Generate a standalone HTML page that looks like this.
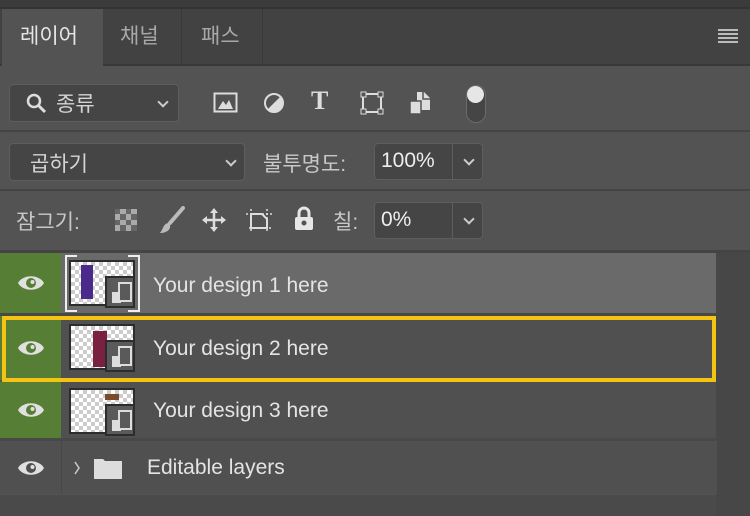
<!DOCTYPE html>
<html><head><meta charset="utf-8"><style>
*{margin:0;padding:0;box-sizing:border-box}
body{width:750px;height:516px;background:#535353;position:relative;overflow:hidden;font-family:"Liberation Sans","Noto Sans CJK KR",sans-serif;color:#ddd}
.a{position:absolute}
.box{position:absolute;background:#454545;border:1px solid #5e5e5e;border-radius:4px}
.t{position:absolute;font-size:21px;color:#d4d4d4;white-space:nowrap}
.chev{position:absolute;width:8px;height:8px;border-right:2px solid #ccc;border-bottom:2px solid #ccc;transform:rotate(45deg)}
.eye{position:absolute;left:0;width:61px;background:#567f35}
.eye svg{position:absolute;left:17px;top:50%;margin-top:-9px}
.row{position:absolute;left:61px;width:655px}
.lt{position:absolute;font-size:21px;color:#e4e4e4;white-space:nowrap}
.th{position:absolute;width:66px;height:46px;border:2px solid #2c2c2c;background-color:#fff;background-image:linear-gradient(45deg,#ccc 25%,transparent 25%,transparent 75%,#ccc 75%),linear-gradient(45deg,#ccc 25%,transparent 25%,transparent 75%,#ccc 75%);background-size:8px 8px;background-position:0 0,4px 4px}
.so{position:absolute;right:-2px;bottom:-4px;width:30px;height:32px;background:#5a5a5a;border:2px solid #2c2c2c}
.so:before{content:"";position:absolute;left:5px;top:14px;width:9px;height:11px;background:#ddd}
.so:after{content:"";position:absolute;left:11px;top:4px;width:10px;height:16px;border:2px solid #ddd;background:#5a5a5a}
</style></head><body>
<div class="a" style="left:0;top:0;width:750px;height:9px;background:#3b3b3b;border-bottom:2px solid #333"></div>
<div class="a" style="left:0;top:9px;width:750px;height:57px;background:#424242;border-bottom:2px solid #383838"></div>
<div class="a" style="left:2px;top:9px;width:101px;height:57px;background:#535353"></div>
<div class="a" style="left:181px;top:9px;width:1px;height:56px;background:#383838"></div>
<div class="a" style="left:262px;top:9px;width:1px;height:56px;background:#383838"></div>
<div class="t" style="left:20px;top:20px;color:#e6e6e6">레이어</div>
<div class="t" style="left:120px;top:20px;color:#a8a8a8">채널</div>
<div class="t" style="left:201px;top:20px;color:#a8a8a8">패스</div>
<div class="a" style="left:718px;top:29px;width:20px;height:14px;background:repeating-linear-gradient(#bbb 0 2px,transparent 2px 4px)"></div>

<div class="box" style="left:9px;top:84px;width:170px;height:38px"></div>
<svg class="a" style="left:26px;top:93px" width="22" height="22"><circle cx="8" cy="8" r="6" fill="none" stroke="#ddd" stroke-width="2.5"/><line x1="12" y1="12" x2="19" y2="19" stroke="#ddd" stroke-width="3"/></svg>
<div class="t" style="left:56px;top:88px">종류</div>
<div class="chev" style="left:159px;top:98px"></div>
<svg class="a" style="left:213px;top:92px" width="26" height="22"><rect x="1.5" y="1.5" width="22" height="18" fill="none" stroke="#ddd" stroke-width="2"/><path d="M5 17 L10 9 L13 13 L16 8 L20 17Z" fill="#ddd"/></svg>
<svg class="a" style="left:263px;top:92px" width="22" height="22"><circle cx="11" cy="11" r="9" fill="none" stroke="#ddd" stroke-width="2"/><path d="M4.6 17.4 A9 9 0 0 0 17.4 4.6Z" fill="#ddd"/></svg>
<div class="t" style="left:311px;top:86px;font-family:'Liberation Serif',serif;font-size:26px;font-weight:bold;color:#ddd">T</div>
<svg class="a" style="left:360px;top:91px" width="24" height="24"><rect x="3" y="3" width="18" height="18" fill="none" stroke="#ddd" stroke-width="2"/><rect x="1" y="1" width="5" height="5" fill="#535353" stroke="#ddd"/><rect x="18" y="1" width="5" height="5" fill="#535353" stroke="#ddd"/><rect x="1" y="18" width="5" height="5" fill="#535353" stroke="#ddd"/><rect x="18" y="18" width="5" height="5" fill="#535353" stroke="#ddd"/></svg>
<svg class="a" style="left:408px;top:90px" width="24" height="26"><path d="M9 2 H16 L22 8 V20 H9Z" fill="#ddd"/><path d="M15 2 V9 H22" fill="none" stroke="#535353" stroke-width="1.5"/><rect x="2" y="11" width="11" height="13" fill="#ddd" stroke="#535353" stroke-width="1.5"/></svg>
<div class="a" style="left:466px;top:85px;width:20px;height:38px;border:1px solid #6a6a6a;border-radius:10px;background:#454545"></div>
<div class="a" style="left:467px;top:86px;width:17px;height:17px;border-radius:50%;background:#e6e6e6"></div>

<div class="a" style="left:0;top:130px;width:750px;height:2px;background:#444"></div>
<div class="box" style="left:9px;top:143px;width:236px;height:38px"></div>
<div class="t" style="left:30px;top:148px">곱하기</div>
<div class="chev" style="left:227px;top:157px"></div>
<div class="t" style="left:263px;top:148px;color:#c8c8c8">불투명도:</div>
<div class="box" style="left:374px;top:143px;width:109px;height:37px"></div>
<div class="a" style="left:452px;top:144px;width:1px;height:35px;background:#5e5e5e"></div>
<div class="t" style="left:381px;top:149px;color:#eee">100%</div>
<div class="chev" style="left:465px;top:156px"></div>

<div class="a" style="left:0;top:189px;width:750px;height:2px;background:#444"></div>
<div class="t" style="left:16px;top:206px;color:#c8c8c8">잠그기:</div>
<svg class="a" style="left:115px;top:209px" width="22" height="22"><rect width="22" height="22" fill="#aaa"/><g fill="#666"><rect x="0" y="0" width="5" height="5"/><rect x="11" y="0" width="5" height="5"/><rect x="5" y="5" width="6" height="6"/><rect x="16" y="5" width="6" height="6"/><rect x="0" y="11" width="5" height="5"/><rect x="11" y="11" width="5" height="5"/><rect x="5" y="16" width="6" height="6"/><rect x="16" y="16" width="6" height="6"/></g></svg>
<svg class="a" style="left:159px;top:206px" width="26" height="28"><path d="M24 2 L11 17" stroke="#bbb" stroke-width="4" stroke-linecap="round"/><path d="M9 17 C4 18 4 24 1 27 C7 27 12 24 11 19Z" fill="#bbb"/></svg>
<svg class="a" style="left:201px;top:207px" width="26" height="26"><path d="M13 1 L9 6 H17Z M13 25 L9 20 H17Z M1 13 L6 9 V17Z M25 13 L20 9 V17Z" fill="#ddd"/><path d="M13 5 V21 M5 13 H21" stroke="#ddd" stroke-width="2.5"/></svg>
<svg class="a" style="left:245px;top:207px" width="28" height="26"><path d="M6 2 V24 M1 7 H27 M4 21 H27 M22 2 V24" stroke="#ddd" stroke-width="1.5" stroke-dasharray="2 2" fill="none"/><path d="M6 7 H17 L22 12 V21 H6Z" fill="none" stroke="#ddd" stroke-width="2"/></svg>
<svg class="a" style="left:293px;top:206px" width="22" height="26"><path d="M6 11 V7 A5 5 0 0 1 16 7 V11" fill="none" stroke="#e6e6e6" stroke-width="3"/><rect x="2" y="11" width="18" height="13" rx="2" fill="#e6e6e6"/><circle cx="11" cy="17" r="2.5" fill="#535353"/></svg>
<div class="t" style="left:333px;top:206px;color:#c8c8c8">칠:</div>
<div class="box" style="left:374px;top:202px;width:109px;height:37px"></div>
<div class="a" style="left:452px;top:203px;width:1px;height:35px;background:#5e5e5e"></div>
<div class="t" style="left:381px;top:208px;color:#eee">0%</div>
<div class="chev" style="left:465px;top:215px"></div>

<div class="a" style="left:0;top:250px;width:750px;height:3px;background:#444"></div>
<div class="a" style="left:716px;top:253px;width:34px;height:263px;background:#474747"></div>
<div class="a" style="left:0;top:495px;width:716px;height:21px;background:#4a4a4a"></div>

<svg width="0" height="0" style="position:absolute"><defs><g id="e"><path d="M1 9 C6 0 22 0 27 9 C22 18 6 18 1 9Z" fill="#e0e0e0"/><circle cx="14" cy="9" r="5" fill="#567f35"/><circle cx="15.5" cy="8" r="2" fill="#e0e0e0"/></g></defs></svg>

<div class="eye" style="top:253px;height:60px"><svg width="28" height="18"><use href="#e"/></svg></div>
<div class="row" style="top:253px;height:60px;background:#6a6a6a"></div>
<div class="a" style="left:65px;top:255px;width:75px;height:57px;border:2px solid #eee;clip-path:polygon(0 0,12px 0,12px 100%,0 100%,0 0,100% 0,100% 100%,calc(100% - 12px) 100%,calc(100% - 12px) 0)"></div>
<div class="th" style="left:69px;top:260px"><div class="a" style="left:10px;top:3px;width:12px;height:34px;background:#4a2a8a"></div><div class="so"></div></div>
<div class="lt" style="left:153px;top:274px">Your design 1 here</div>

<div class="a" style="left:0;top:313px;width:716px;height:3px;background:#484848"></div>
<div class="eye" style="top:316px;height:64px"><svg width="28" height="18"><use href="#e"/></svg></div>
<div class="row" style="top:316px;height:64px;background:#505050"></div>
<div class="th" style="left:69px;top:324px"><div class="a" style="left:22px;top:5px;width:14px;height:36px;background:#7a2040"></div><div class="so"></div></div>
<div class="lt" style="left:153px;top:337px">Your design 2 here</div>
<div class="a" style="left:2px;top:316px;width:714px;height:66px;border:4px solid #f5c413"></div>

<div class="eye" style="top:382px;height:56px"><svg width="28" height="18"><use href="#e"/></svg></div>
<div class="row" style="top:382px;height:56px;background:#505050"></div>
<div class="th" style="left:69px;top:388px"><div class="a" style="left:34px;top:4px;width:14px;height:6px;background:#7a4a2a"></div><div class="so"></div></div>
<div class="lt" style="left:153px;top:399px">Your design 3 here</div>

<div class="a" style="left:0;top:438px;width:716px;height:3px;background:#484848"></div>
<div class="a" style="left:0;top:441px;width:61px;height:53px;background:#505050"></div>
<div class="a" style="left:61px;top:441px;width:1px;height:53px;background:#474747"></div>
<div class="row" style="left:62px;top:441px;height:53px;background:#505050"></div>
<svg class="a" style="left:17px;top:459px" width="28" height="18"><path d="M1 9 C6 0 22 0 27 9 C22 18 6 18 1 9Z" fill="#e0e0e0"/><circle cx="14" cy="9" r="5" fill="#505050"/><circle cx="15.5" cy="8" r="2" fill="#e0e0e0"/></svg>
<svg class="a" style="left:73px;top:460px" width="8" height="16"><path d="M2 2 L6 8 L2 14" fill="none" stroke="#ccc" stroke-width="1.5"/></svg>
<svg class="a" style="left:93px;top:456px" width="30" height="24"><path d="M1 3 H10 L12 5 H29 V23 H1Z" fill="#ddd"/></svg>
<div class="lt" style="left:147px;top:456px">Editable layers</div>
</body></html>
